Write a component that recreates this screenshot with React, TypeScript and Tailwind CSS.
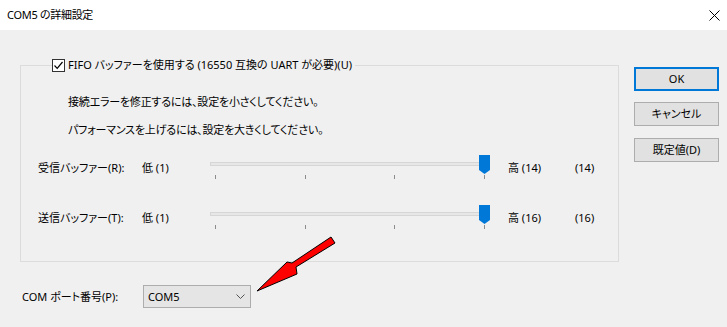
import React from "react";

const FONT = "font-['Noto_Sans','Noto_Sans_CJK_JP',sans-serif] [font-feature-settings:'palt']";

function Slider() {
  // trackbar: max value, thumb at right end
  return (
    <div className="relative h-[26px] w-[280px]">
      <div className="absolute left-0 right-[3px] top-[7px] h-[4px] border border-[#d6d6d6] bg-[#e7e7e7]" />
      <svg className="absolute left-[269px] top-0" width="11" height="19" viewBox="0 0 11 19">
        <polygon points="0,0 11,0 11,15 5.5,19 0,15" fill="#0078d7" />
      </svg>
      {[5, 95, 184, 274].map((x) => (
        <div key={x} className="absolute top-[20px] h-[4px] w-px bg-[#8c8c8c]" style={{ left: x }} />
      ))}
    </div>
  );
}

function BufferRow({ label, high }: { label: string; high: number }) {
  return (
    <div className="flex h-[26px] items-center">
      <span className="w-[104px]">{label}</span>
      <span className="w-[68px]">低 (1)</span>
      <Slider />
      <span className="ml-[18px] w-[67px]">高 ({high})</span>
      <span>({high})</span>
    </div>
  );
}

function Button({ children, primary }: { children: React.ReactNode; primary?: boolean }) {
  return (
    <div
      className={
        primary
          ? "flex h-[24px] w-[85px] items-center justify-center border-2 border-[#0078d7] bg-[#e1e1e1]"
          : "flex h-[24px] w-[85px] items-center justify-center border border-[#adadad] bg-[#e1e1e1]"
      }
    >
      {children}
    </div>
  );
}

export default function App() {
  return (
    <div className={`relative h-[327px] w-[727px] overflow-hidden bg-[#f0f0f0] text-[11px] leading-[16px] text-black ${FONT}`}>
      {/* title bar */}
      <div className="flex h-[30px] items-center justify-between bg-white pl-[7px] pr-[6px]">
        <span className="tracking-[-0.3px]">COM5 の詳細設定</span>
        <svg width="11" height="11" viewBox="0 0 11 11" className="mr-[1px]">
          <path d="M0.5 0.5 L10.5 10.5 M10.5 0.5 L0.5 10.5" stroke="#000" strokeWidth="1" />
        </svg>
      </div>

      <div className="flex">
        {/* left: settings */}
        <div className="w-[634px] pl-[20px] pt-[35px]">
          <div className="relative h-[197px] w-[599px] border border-[#dcdcdc] pl-[17px] pt-[28px]">
            {/* group legend with checkbox */}
            <div className="absolute left-[31px] top-[-9px] flex items-center gap-[3px] bg-[#f0f0f0] pr-[3px]">
              <div className="flex h-[13px] w-[13px] items-center justify-center border border-[#333] bg-white">
                <svg width="11" height="11" viewBox="0 0 11 11">
                  <path d="M1.5 5.5 L4.2 8.3 L9.5 2" fill="none" stroke="#000" strokeWidth="1.2" />
                </svg>
              </div>
              <span>FIFO バッファーを使用する (16550 互換の UART が必要)(U)</span>
            </div>

            <div className="pl-[30px] tracking-[-0.2px]">
              <p>接続エラーを修正するには、設定を小さくしてください。</p>
              <p className="mt-[12px]">パフォーマンスを上げるには、設定を大きくしてください。</p>
            </div>

            <div className="mt-[17px] flex flex-col gap-[24px]">
              <BufferRow label="受信バッファー(R):" high={14} />
              <BufferRow label="送信バッファー(T):" high={16} />
            </div>
          </div>

          <div className="mt-[23px] flex items-center">
            <span className="ml-[2px] w-[121px]">COM ポート番号(P):</span>
            <div className="flex h-[23px] w-[108px] items-center justify-between border border-[#adadad] bg-[#e5e5e5] pl-[4px] pr-[5px]">
              <span>COM5</span>
              <svg width="9" height="5" viewBox="0 0 9 5">
                <path d="M0.5 0.5 L4.5 4.5 L8.5 0.5" fill="none" stroke="#555" strokeWidth="1" />
              </svg>
            </div>
          </div>
        </div>

        {/* right: buttons */}
        <div className="flex flex-col gap-[11px] pt-[37px]">
          <Button primary>OK</Button>
          <Button>キャンセル</Button>
          <div className="mt-px">
            <Button>既定値(D)</Button>
          </div>
        </div>
      </div>

      {/* red annotation arrow */}
      <svg className="pointer-events-none absolute left-0 top-0" width="727" height="327" viewBox="0 0 727 327">
        <polygon
          points="331,237 335,243 296,267 297,274 257,291 287,262 292,263"
          fill="#ff0000"
          stroke="#000"
          strokeWidth="1"
          strokeLinejoin="miter"
        />
      </svg>
    </div>
  );
}
